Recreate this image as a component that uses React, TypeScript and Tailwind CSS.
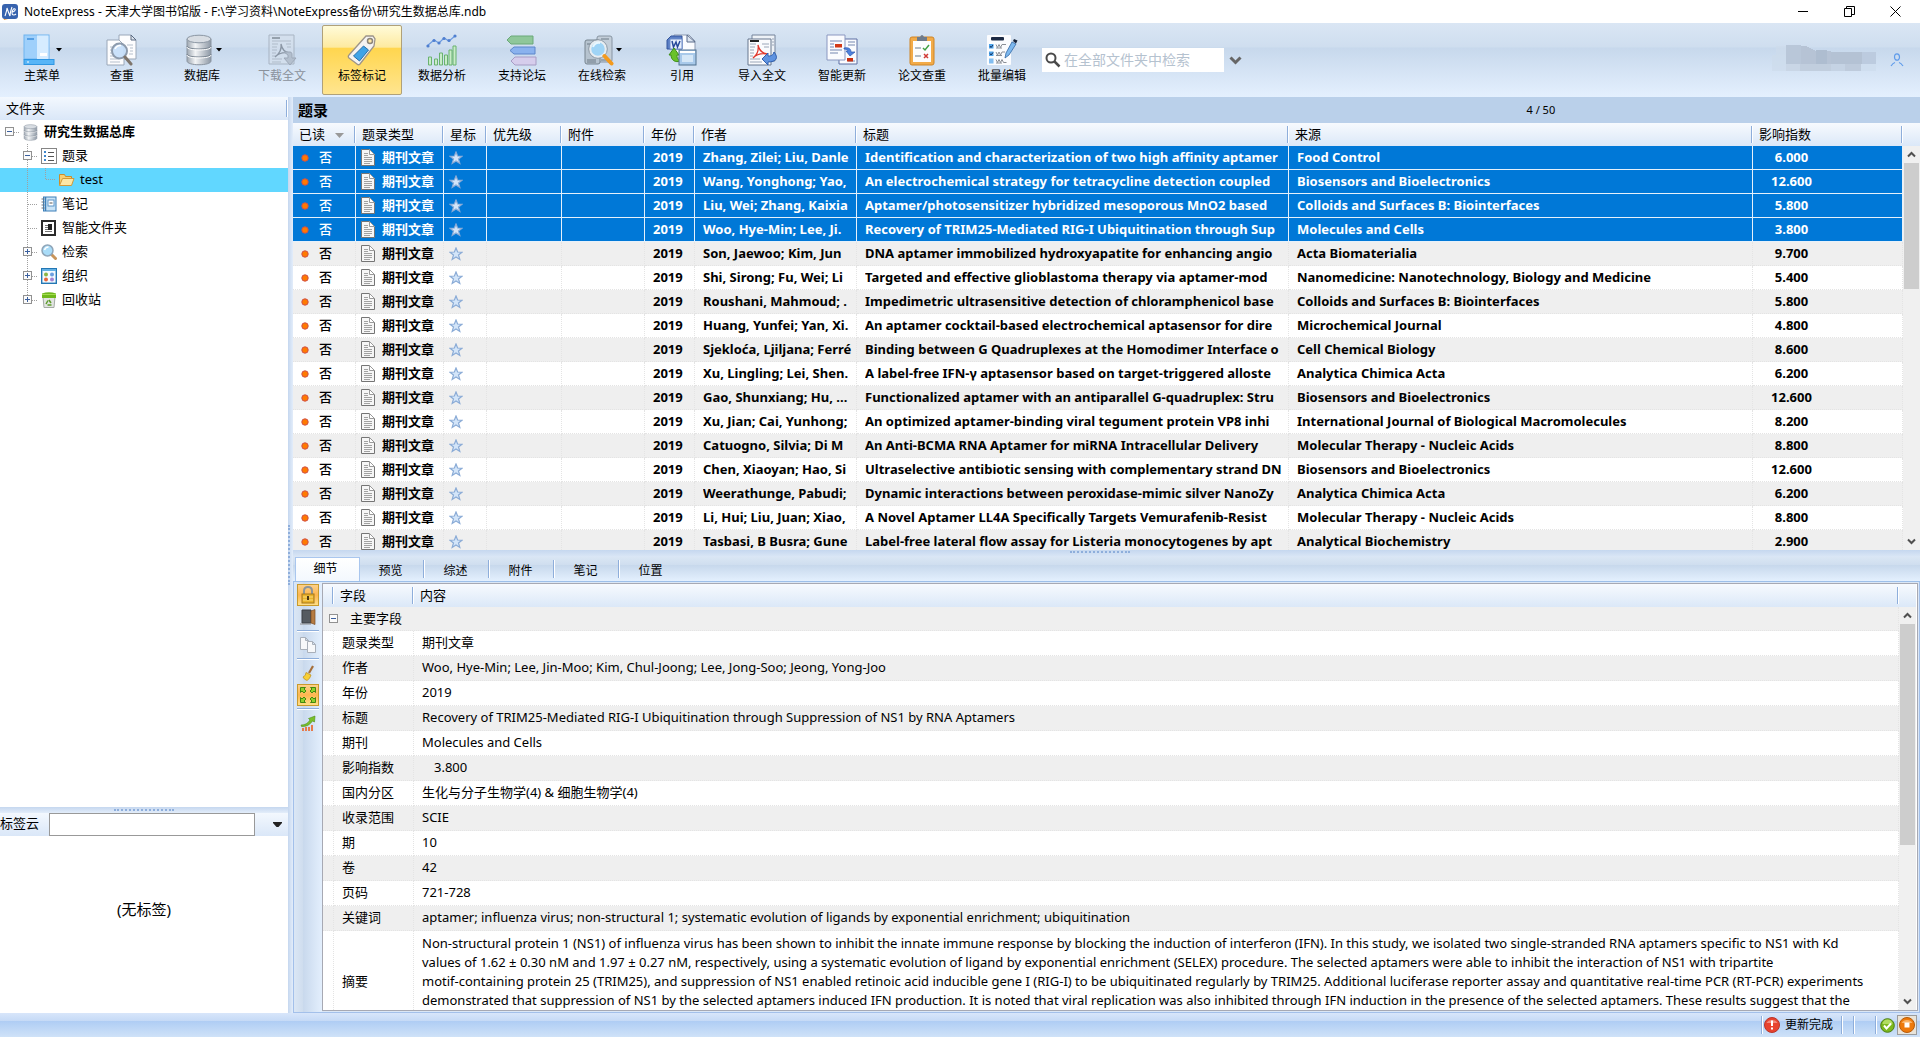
import { useState } from "react";
import type { ReactNode } from "react";

type Reference = {
  authors: string;
  title: string;
  source: string;
  impact: string;
};

type TreeNode = {
  label: string;
  icon: ReactNode;
  guides: GuideKind[];
  bold?: boolean;
  selected?: boolean;
};

type GuideKind = "root" | "minus" | "plus" | "plusLast" | "branch" | "line" | "elbow";

const REFERENCES: Reference[] = [
  { authors: "Zhang, Zilei; Liu, Danle", title: "Identification and characterization of two high affinity aptamer", source: "Food Control", impact: "6.000" },
  { authors: "Wang, Yonghong; Yao,", title: "An electrochemical strategy for tetracycline detection coupled", source: "Biosensors and Bioelectronics", impact: "12.600" },
  { authors: "Liu, Wei; Zhang, Kaixia", title: "Aptamer/photosensitizer hybridized mesoporous MnO2 based", source: "Colloids and Surfaces B: Biointerfaces", impact: "5.800" },
  { authors: "Woo, Hye-Min; Lee, Ji.", title: "Recovery of TRIM25-Mediated RIG-I Ubiquitination through Sup", source: "Molecules and Cells", impact: "3.800" },
  { authors: "Son, Jaewoo; Kim, Jun", title: "DNA aptamer immobilized hydroxyapatite for enhancing angio", source: "Acta Biomaterialia", impact: "9.700" },
  { authors: "Shi, Sirong; Fu, Wei; Li", title: "Targeted and effective glioblastoma therapy via aptamer-mod", source: "Nanomedicine: Nanotechnology, Biology and Medicine", impact: "5.400" },
  { authors: "Roushani, Mahmoud; .", title: "Impedimetric ultrasensitive detection of chloramphenicol base", source: "Colloids and Surfaces B: Biointerfaces", impact: "5.800" },
  { authors: "Huang, Yunfei; Yan, Xi.", title: "An aptamer cocktail-based electrochemical aptasensor for dire", source: "Microchemical Journal", impact: "4.800" },
  { authors: "Sjekloća, Ljiljana; Ferré", title: "Binding between G Quadruplexes at the Homodimer Interface o", source: "Cell Chemical Biology", impact: "8.600" },
  { authors: "Xu, Lingling; Lei, Shen.", title: "A label-free IFN-γ aptasensor based on target-triggered alloste", source: "Analytica Chimica Acta", impact: "6.200" },
  { authors: "Gao, Shunxiang; Hu, ...", title: "Functionalized aptamer with an antiparallel G-quadruplex: Stru", source: "Biosensors and Bioelectronics", impact: "12.600" },
  { authors: "Xu, Jian; Cai, Yunhong;", title: "An optimized aptamer-binding viral tegument protein VP8 inhi", source: "International Journal of Biological Macromolecules", impact: "8.200" },
  { authors: "Catuogno, Silvia; Di M", title: "An Anti-BCMA RNA Aptamer for miRNA Intracellular Delivery", source: "Molecular Therapy - Nucleic Acids", impact: "8.800" },
  { authors: "Chen, Xiaoyan; Hao, Si", title: "Ultraselective antibiotic sensing with complementary strand DN", source: "Biosensors and Bioelectronics", impact: "12.600" },
  { authors: "Weerathunge, Pabudi;", title: "Dynamic interactions between peroxidase-mimic silver NanoZy", source: "Analytica Chimica Acta", impact: "6.200" },
  { authors: "Li, Hui; Liu, Juan; Xiao,", title: "A Novel Aptamer LL4A Specifically Targets Vemurafenib-Resist", source: "Molecular Therapy - Nucleic Acids", impact: "8.800" },
  { authors: "Tasbasi, B Busra; Gune", title: "Label-free lateral flow assay for Listeria monocytogenes by apt", source: "Analytical Biochemistry", impact: "2.900" },
];

const DETAILS = [
  { field: "题录类型", value: "期刊文章" },
  { field: "作者", value: "Woo, Hye-Min; Lee, Jin-Moo; Kim, Chul-Joong; Lee, Jong-Soo; Jeong, Yong-Joo" },
  { field: "年份", value: "2019" },
  { field: "标题", value: "Recovery of TRIM25-Mediated RIG-I Ubiquitination through Suppression of NS1 by RNA Aptamers" },
  { field: "期刊", value: "Molecules and Cells" },
  { field: "影响指数", value: "3.800", indent: true },
  { field: "国内分区", value: "生化与分子生物学(4) & 细胞生物学(4)" },
  { field: "收录范围", value: "SCIE" },
  { field: "期", value: "10" },
  { field: "卷", value: "42" },
  { field: "页码", value: "721-728" },
  { field: "关键词", value: "aptamer; influenza virus; non-structural 1; systematic evolution of ligands by exponential enrichment; ubiquitination" },
];

const ABSTRACT = [
  "Non-structural protein 1 (NS1) of influenza virus has been shown to inhibit the innate immune response by blocking the induction of interferon (IFN). In this study, we isolated two single-stranded RNA aptamers specific to NS1 with Kd",
  "values of 1.62 ± 0.30 nM and 1.97 ± 0.27 nM, respectively, using a systematic evolution of ligand by exponential enrichment (SELEX) procedure. The selected aptamers were able to inhibit the interaction of NS1 with tripartite",
  "motif-containing protein 25 (TRIM25), and suppression of NS1 enabled retinoic acid inducible gene I (RIG-I) to be ubiquitinated regularly by TRIM25. Additional luciferase reporter assay and quantitative real-time PCR (RT-PCR) experiments",
  "demonstrated that suppression of NS1 by the selected aptamers induced IFN production. It is noted that viral replication was also inhibited through IFN induction in the presence of the selected aptamers. These results suggest that the",
];

const TABS = ["细节", "预览", "综述", "附件", "笔记", "位置"];

export default function App() {
  const [tab, setTab] = useState("细节");

  return (
    <div className="flex h-screen flex-col overflow-hidden bg-[#dbe7f6] font-['Noto_Sans','Noto_Sans_CJK_SC',sans-serif] text-[13px] text-black">
      <TitleBar />
      <Toolbar />
      <div className="flex min-h-0 flex-1">
        <aside className="flex w-[15%] shrink-0 flex-col bg-white">
          <FolderTree />
          <TagCloud />
        </aside>
        <div className="flex w-[5px] shrink-0 items-center bg-[linear-gradient(90deg,#c5d7ef,#e3edfa)]">
          <div className="h-[60px] w-[3px] border-l-2 border-dotted border-[#8eaedb]" />
        </div>
        <main className="flex min-w-0 flex-1 flex-col">
          <div className="flex h-[26px] shrink-0 items-center bg-[#bad0ea] pl-[5px]">
            <h1 className="w-3/4 text-[15px] font-bold">题录</h1>
            <span className="ml-3 text-[11px]">4 / 50</span>
          </div>
          <ReferenceList />
          <DetailPanel tab={tab} onTab={setTab} />
        </main>
      </div>
      <StatusBar />
    </div>
  );
}

function TitleBar() {
  return (
    <header className="flex h-[23px] shrink-0 items-center bg-white pl-[2px]">
      <svg width="16" height="18" viewBox="0 0 16 18">
        <path d="M1 12l1 5 4-1z" fill="#f29a2e" />
        <rect x="0" y="1" width="16" height="15" rx="3" fill="#3763ae" />
        <path d="M3 13c1-3 2-6 2-8 1 3 2 6 3 8 0-3 1-6 2-9M10 9c2 0 4-2 3-3s-3 1-3 4 3 2 4 1" fill="none" stroke="#fff" strokeWidth="1.1" />
      </svg>
      <span className="ml-[6px] flex-1 text-[12px]">NoteExpress - 天津大学图书馆版 - F:\学习资料\NoteExpress备份\研究生数据总库.ndb</span>
      <button aria-label="最小化" className="flex w-[46px] justify-center">
        <svg width="11" height="11"><path d="M0 5.5h10" stroke="#000" /></svg>
      </button>
      <button aria-label="还原" className="flex w-[46px] justify-center">
        <svg width="11" height="11" fill="none" stroke="#000"><path d="M.5 2.5h7v8h-7zM2.5 2.5v-2h8v8h-3" /></svg>
      </button>
      <button aria-label="关闭" className="mr-[2px] flex w-[46px] justify-center">
        <svg width="11" height="11" stroke="#000"><path d="M.5.5l10 10M10.5.5l-10 10" /></svg>
      </button>
    </header>
  );
}

function Toolbar() {
  return (
    <nav className="flex h-[74px] shrink-0 bg-[linear-gradient(#dae6f4_0%,#cfdeef_32%,#c7d8ec_34%,#e4f0fe_100%)] pl-[2px]">
      <ToolButton label="主菜单" icon={<MenuIcon />} menu />
      <ToolButton label="查重" icon={<DuplicateIcon />} />
      <ToolButton label="数据库" icon={<DatabaseIcon size={32} />} menu />
      <ToolButton label="下载全文" icon={<DownloadIcon />} disabled />
      <ToolButton label="标签标记" icon={<TagIcon />} active />
      <ToolButton label="数据分析" icon={<AnalysisIcon />} />
      <ToolButton label="支持论坛" icon={<ForumIcon />} />
      <ToolButton label="在线检索" icon={<OnlineSearchIcon />} menu />
      <ToolButton label="引用" icon={<CiteIcon />} />
      <ToolButton label="导入全文" icon={<ImportIcon />} />
      <ToolButton label="智能更新" icon={<UpdateIcon />} />
      <ToolButton label="论文查重" icon={<ClipboardIcon />} />
      <ToolButton label="批量编辑" icon={<BatchIcon />} />
      <label className="mt-[25px] flex h-[24px] w-[182px] items-center bg-white">
        <svg className="ml-[3px] shrink-0" width="16" height="16" fill="none" stroke="#4a4a4a">
          <circle cx="6" cy="6" r="4.5" strokeWidth="2" />
          <path d="M9.500 9.500l5 5" strokeWidth="2.500" />
        </svg>
        <input className="ml-[3px] h-[22px] min-w-0 flex-1 pb-[2px] text-[14px] outline-none placeholder:text-[#b5c2cf]" placeholder="在全部文件夹中检索" />
      </label>
      <button aria-label="检索选项" className="mt-[25px] flex h-[24px] w-[22px] items-center justify-center">
        <svg width="13" height="9" fill="none" stroke="#666" strokeWidth="3"><path d="M1.500 1.500l5 5 5-5" /></svg>
      </button>
      <div className="flex-1" />
      <svg className="mt-[20px]" width="110" height="28" shapeRendering="crispEdges">
        <path fill="#cddbeb" d="M4 3h10v30H0V12h4z" opacity=".7" />
        <path fill="#b9c7d9" d="M14 2h15v19H14z" />
        <path fill="#b6c3d5" d="M29 3h5l10 5h15v13H29z" />
        <path fill="#aebdd0" d="M44 7h11v14H44z" />
        <path fill="#b4c2d4" d="M59 9h31v12H59z" />
        <path fill="#bccbdf" d="M90 9h14v12H90z" />
        <path fill="#c9d6e6" d="M14 21h14v7H14z" />
        <path fill="#c1cede" d="M28 21h31v12H28z" />
        <path fill="#c5d3e4" d="M59 21h14v12H59z" />
        <path fill="#becbdc" d="M73 21h16v12H73z" />
        <path fill="#cfdeef" d="M89 21h15v12H89z" />
      </svg>
      <button aria-label="用户" className="mr-[16px] ml-[8px] h-[74px] w-[14px]">
        <svg width="14" height="14" fill="none" stroke="#5f9bea" strokeWidth="1.200">
          <ellipse cx="7" cy="4" rx="2.500" ry="3.200" />
          <path d="M1 13q2-3 4-3.500M13 13q-2-3-4-3.500" />
        </svg>
      </button>
    </nav>
  );
}

function ToolButton({ label, icon, menu, active, disabled }: { label: string; icon: ReactNode; menu?: boolean; active?: boolean; disabled?: boolean }) {
  return (
    <button
      disabled={disabled}
      className={`mt-[2px] flex h-[70px] w-[80px] shrink-0 flex-col items-center rounded-[2px] border pt-[8px] ${active ? "border-[#b0a179] bg-[linear-gradient(#fffbd9_0%,#fdeaa0_31%,#ffd64f_33%,#ffe58f_100%)]" : "border-transparent"} ${disabled ? "text-[#8a919b]" : ""}`}
    >
      <span className="flex h-[32px] items-center">
        {icon}
        {menu ? <svg className="ml-[1px]" width="6" height="4"><path d="M0 0h6L3 3.500z" /></svg> : null}
      </span>
      <span className="text-[12px] leading-[20px]">{label}</span>
    </button>
  );
}

function FolderTree() {
  const nodes: TreeNode[] = [
    { label: "研究生数据总库", icon: <DatabaseIcon size={17} />, guides: ["root"], bold: true },
    { label: "题录", icon: <ListIcon />, guides: ["minus"] },
    { label: "test", icon: <FolderIcon />, guides: ["line", "elbow"], selected: true },
    { label: "笔记", icon: <NotebookIcon />, guides: ["branch"] },
    { label: "智能文件夹", icon: <SmartFolderIcon />, guides: ["branch"] },
    { label: "检索", icon: <MagnifierIcon />, guides: ["plus"] },
    { label: "组织", icon: <OrganizeIcon />, guides: ["plus"] },
    { label: "回收站", icon: <RecycleIcon />, guides: ["plusLast"] },
  ];

  return (
    <>
      <div className="flex h-[23px] shrink-0 items-center bg-[linear-gradient(#f3f8fe,#dae7f8)] pl-[6px]">
        <span className="flex-1">文件夹</span>
        <span className="h-[17px] w-[2px] border-r border-white bg-[#8eaedb]" />
      </div>
      <ul className="min-h-0 flex-[687]">
        {nodes.map((node) => (
          <li
            key={node.label}
            className={`flex h-[24px] items-center ${node.guides[0] === "root" ? "pl-[4px]" : "pl-[22px]"} ${node.selected ? "bg-[#61d7ff]" : ""}`}
          >
            {node.guides.map((kind) => <Guide key={kind} kind={kind} />)}
            <span className="flex w-[17px] shrink-0 justify-center">{node.icon}</span>
            <span className={`ml-[5px] ${node.bold ? "font-bold" : ""}`}>{node.label}</span>
          </li>
        ))}
      </ul>
    </>
  );
}

function Guide({ kind }: { kind: GuideKind }) {
  const boxed = kind === "root" || kind === "minus" || kind === "plus" || kind === "plusLast";
  const lines: Record<GuideKind, string> = {
    root: "M5.500 12.500h9",
    minus: "M5.500 0v24M5.500 12.500h9",
    plus: "M5.500 0v24M5.500 12.500h9",
    plusLast: "M5.500 0v12M5.500 12.500h9",
    branch: "M5.500 0v24M5.500 12.500h9",
    line: "M5.500 0v24",
    elbow: "M5.500 0v12M5.500 11.500h9",
  };
  return (
    <svg className="shrink-0" width="18" height="24" fill="none" shapeRendering="crispEdges">
      <path d={lines[kind]} stroke="#a0a0a0" strokeDasharray="1 1" />
      {boxed ? <ExpandBox plus={kind === "plus" || kind === "plusLast"} y={7} /> : null}
    </svg>
  );
}

function ExpandBox({ plus, y }: { plus?: boolean; y: number }) {
  return (
    <g transform={`translate(1 ${y})`}>
      <rect x=".5" y=".5" width="8" height="8" fill="#fbfbfb" stroke="#919191" />
      <path d={plus ? "M2 4.500h5M4.500 2v5" : "M2 4.500h5"} stroke="#3a5f9e" />
    </g>
  );
}

function TagCloud() {
  return (
    <>
      <div className="flex h-[6px] shrink-0 items-center justify-center bg-[linear-gradient(#c5d7ef,#e3edfa)]">
        <div className="w-[60px] border-t-2 border-dotted border-[#8eaedb]" />
      </div>
      <div className="flex h-[23px] shrink-0 items-center bg-[linear-gradient(#f3f8fe,#dae7f8)]">
        <label htmlFor="tag-filter" className="w-[49px] pb-[2px] whitespace-nowrap">标签云</label>
        <input id="tag-filter" className="h-[23px] min-w-0 flex-1 border border-[#999] bg-white px-1 outline-none" />
        <button aria-label="标签选项" className="flex w-[33px] justify-center pl-[11px]">
          <svg width="9" height="5"><path d="M0 0h9v1L5.500 5h-2L0 1z" fill="#222" /></svg>
        </button>
      </div>
      <div className="flex min-h-0 flex-[177] items-center justify-center text-[15px]">
        <span className="mb-[30px]">(无标签)</span>
      </div>
    </>
  );
}

function HeadCell({ label, className, sorted }: { label: string; className?: string; sorted?: boolean }) {
  return (
    <th className={`h-[23px] p-0 text-left font-normal ${className ?? ""}`}>
      <div className="flex items-center pl-[6px]">
        <span className="flex-1 whitespace-nowrap">
          {label}
          {sorted ? <svg className="ml-[10px] inline-block" width="9" height="5"><path d="M0 0h9L4.500 5z" fill="#999" /></svg> : null}
        </span>
        <span className="h-[17px] w-[2px] border-r border-white bg-[#8eaedb]" />
      </div>
    </th>
  );
}

function ReferenceList() {
  return (
    <section className="flex min-h-0 flex-[427] overflow-hidden bg-white">
      <div className="min-w-0 flex-1">
        <table className="w-full table-fixed border-separate border-spacing-0">
          <thead className="bg-[linear-gradient(#f7fafe,#dbe8f8)]">
            <tr>
              <HeadCell label="已读" sorted className="w-[63px]" />
              <HeadCell label="题录类型" className="w-[88px]" />
              <HeadCell label="星标" className="w-[43px]" />
              <HeadCell label="优先级" className="w-[75px]" />
              <HeadCell label="附件" className="w-[83px]" />
              <HeadCell label="年份" className="w-[50px]" />
              <HeadCell label="作者" className="w-[162px]" />
              <HeadCell label="标题" className="w-[432px]" />
              <HeadCell label="来源" />
              <HeadCell label="影响指数" className="w-[150px]" />
            </tr>
          </thead>
          <tbody className="font-bold">
            {REFERENCES.map((ref, i) => (
              <ReferenceRow key={i} item={ref} selected={i < 4} striped={i % 2 === 0} />
            ))}
          </tbody>
        </table>
      </div>
      <div className="flex w-[17px] shrink-0 flex-col">
        <div className="h-[23px] bg-[linear-gradient(#f7fafe,#dbe8f8)]" />
        <ScrollBar thumb="h-[34%]" />
      </div>
    </section>
  );
}

function ReferenceRow({ item, selected, striped }: { item: Reference; selected: boolean; striped: boolean }) {
  const line = selected ? "border-r border-b border-[#e6f1fb]" : "border-r border-b border-dotted border-[#e4e4e4]";
  const tone = selected ? "bg-[#0078d7] text-white" : striped ? "bg-[#efefef]" : "bg-white";
  const text = `h-[24px] overflow-hidden p-0 pr-[4px] pl-[8px] whitespace-nowrap ${line}`;
  return (
    <tr className={tone}>
      <td className={`h-[24px] p-0 ${line}`}>
        <span className="flex items-center pl-[8px]">
          <svg width="8" height="8"><circle cx="4" cy="4" r="3.200" fill="#ff7a00" stroke="#d0524a" /></svg>
          <span className="ml-[10px] font-medium">否</span>
        </span>
      </td>
      <td className={`h-[24px] p-0 ${line}`}>
        <span className="flex items-center pl-[5px] whitespace-nowrap">
          <PageIcon />
          <span className="ml-[7px]">期刊文章</span>
        </span>
      </td>
      <td className={`h-[24px] p-0 pl-[5px] ${line}`}><StarIcon /></td>
      <td className={`h-[24px] p-0 ${line}`} />
      <td className={`h-[24px] p-0 ${line}`} />
      <td className={text}>2019</td>
      <td className={text}><div className="overflow-hidden">{item.authors}</div></td>
      <td className={text}><div className="overflow-hidden">{item.title}</div></td>
      <td className={text}>{item.source}</td>
      <td className={`h-[24px] p-0 pr-[72px] text-center ${line}`}>{item.impact}</td>
    </tr>
  );
}

function ScrollBar({ thumb }: { thumb: string }) {
  return (
    <div className="flex min-h-0 flex-1 flex-col items-center bg-[#f0f0f0]">
      <button aria-label="向上滚动" className="flex h-[17px] items-center">
        <svg width="9" height="7" fill="none" stroke="#505050" strokeWidth="2"><path d="M1 5.500L4.500 2 8 5.500" /></svg>
      </button>
      <div className="flex min-h-0 w-full flex-1 justify-center">
        <div className={`w-[15px] bg-[#cdcdcd] ${thumb}`} />
      </div>
      <button aria-label="向下滚动" className="flex h-[17px] items-center">
        <svg width="9" height="7" fill="none" stroke="#505050" strokeWidth="2"><path d="M1 1.500L4.500 5 8 1.500" /></svg>
      </button>
    </div>
  );
}

function DetailPanel({ tab, onTab }: { tab: string; onTab: (t: string) => void }) {
  return (
    <section className="flex min-h-0 flex-[463] flex-col">
      <div className="flex h-[7px] shrink-0 justify-center bg-[linear-gradient(#c5d7ef,#dbe7f6)] pt-[1px]">
        <div className="mr-[14px] h-[2px] w-[60px] border-t-2 border-dotted border-[#8eaedb]" />
      </div>
      <div className="flex h-[25px] shrink-0 items-end border-b border-[#9dbfe9] bg-[linear-gradient(#dae6f4_0%,#cfdeef_32%,#c7d8ec_34%,#e4f0fe_100%)] pl-[2px]">
        {TABS.map((t) => (
          <button
            key={t}
            onClick={() => onTab(t)}
            className={`relative flex h-[24px] w-[65px] justify-center pr-[4px] text-[12px] ${t === tab ? "border border-b-0 border-[#a9c6ee] bg-[linear-gradient(#ffffff,#f3f8fe)] leading-[22px]" : "leading-[28px]"}`}
          >
            {t}
            {t !== tab && t !== "位置" ? <span className="absolute top-[3px] right-0 h-[18px] w-[2px] border-r border-white bg-[#8eaedb]" /> : null}
          </button>
        ))}
      </div>
      <div className="flex min-h-0 flex-1 border border-t-0 border-[#a3c0ea]">
        <SideTools />
        <div className="my-px mr-px flex min-w-0 flex-1 overflow-hidden border border-[#a7a9b3] bg-white pr-px">
          <div className="min-w-0 flex-1 overflow-hidden">
            <DetailTable />
          </div>
          <div className="flex w-[17px] shrink-0 flex-col">
            <div className="h-[23px] bg-[linear-gradient(#f7fafe,#dbe8f8)]" />
            <ScrollBar thumb="h-[60%]" />
          </div>
        </div>
      </div>
    </section>
  );
}

function DetailTable() {
  const line = "border-r border-b border-dotted border-[#e4e4e4]";
  return (
    <table className="w-full table-fixed border-separate border-spacing-0">
      <thead className="bg-[linear-gradient(#f7fafe,#dbe8f8)]">
        <tr>
          <HeadCell label="" className="w-[11px]" />
          <HeadCell label="字段" className="w-[80px]" />
          <HeadCell label="内容" />
        </tr>
      </thead>
      <tbody>
        <tr className="bg-[#efefef]">
          <td colSpan={3} className={`h-[24px] p-0 ${line}`}>
            <span className="flex items-center pl-[5px]">
              <svg width="11" height="11" shapeRendering="crispEdges"><ExpandBox y={1} /></svg>
              <span className="ml-[11px]">主要字段</span>
            </span>
          </td>
        </tr>
        {DETAILS.map((d, i) => (
          <tr key={d.field} className={i % 2 === 1 ? "bg-[#efefef]" : ""}>
            <td className={`h-[25px] p-0 ${line}`} />
            <td className={`h-[25px] p-0 pl-[8px] ${line}`}>{d.field}</td>
            <td className={`h-[25px] p-0 whitespace-nowrap ${d.indent ? "pl-[20px]" : "pl-[8px]"} ${line}`}>{d.value}</td>
          </tr>
        ))}
        <tr>
          <td className={`h-[103px] p-0 ${line}`} />
          <td className={`h-[103px] p-0 pl-[8px] ${line}`}>摘要</td>
          <td className={`h-[103px] p-0 pt-[3px] pl-[8px] align-top leading-[19px] whitespace-nowrap ${line}`}>
            {ABSTRACT.map((text) => <p key={text}>{text}</p>)}
          </td>
        </tr>
      </tbody>
    </table>
  );
}

function SideTools() {
  const base = "flex h-[22px] w-[22px] shrink-0 items-center justify-center border";
  const on = "border-[#c99a2c] bg-[linear-gradient(#fcd08a,#fdb64f_50%,#ffdf86)]";
  return (
    <div className="flex w-[28px] shrink-0 flex-col items-center bg-[linear-gradient(90deg,#dbe7f5_0%,#cfddee_32%,#c9d9ed_34%,#e3effd_100%)] pt-[2px]">
      <button aria-label="锁定" className={`${base} ${on}`}><LockIcon /></button>
      <button aria-label="关闭面板" className={`${base} border-transparent`}><DoorIcon /></button>
      <Divider />
      <button aria-label="复制" className={`${base} border-transparent`}><CopyIcon /></button>
      <Divider />
      <button aria-label="清理" className={`${base} border-transparent`}><BroomIcon /></button>
      <button aria-label="展开" className={`${base} ${on}`}><ExpandIcon /></button>
      <Divider />
      <button aria-label="统计" className={`${base} border-transparent`}><TrendIcon /></button>
    </div>
  );
}

function Divider() {
  return <span className="my-[2px] h-[2px] w-[22px] shrink-0 border-b border-white bg-[#8eaedb]" />;
}

function StatusBar() {
  const sep = "h-[18px] w-[2px] border-r border-white bg-[#8eaedb]";
  return (
    <footer className="flex h-[24px] shrink-0 items-center justify-end bg-[linear-gradient(#d8e6fa_0%,#c6daf6_32%,#afcdf4_34%,#cfe2f8_100%)] pr-[3px] text-[12px]">
      <span className={sep} />
      <svg className="ml-px" width="16" height="16" viewBox="0 0 16 16">
        <circle cx="8" cy="8" r="7.500" fill="#e8432f" stroke="#b9362a" />
        <path d="M2.500 6a6 5 0 0111 0z" fill="#f28b7c" />
        <path d="M8 3.500v5.500M8 10.500v2" stroke="#fff" strokeWidth="2" />
      </svg>
      <span className="mr-[8px] ml-[5px]">更新完成</span>
      <span className={sep} />
      <span className={`ml-[10px] ${sep}`} />
      <span className={`mr-[3px] ml-[20px] ${sep}`} />
      <svg width="15" height="15" viewBox="0 0 15 15">
        <circle cx="7.500" cy="7.500" r="6.800" fill="#7cb81f" stroke="#4b7d12" />
        <path d="M2.500 6a5 4.500 0 0110 0z" fill="#b2dc62" />
        <path d="M4 7.500l2.500 3L11 5.500" fill="none" stroke="#fff" strokeWidth="2" />
      </svg>
      <button aria-label="停止" className="ml-[2px] flex h-[20px] w-[20px] items-center justify-center border border-[#9c9c9c] bg-[#e9e4da]">
        <svg width="16" height="16" viewBox="0 0 16 16">
          <circle cx="8" cy="8" r="7.500" fill="#ee7a0c" stroke="#b75b0a" />
          <path d="M2.500 6a6 5 0 0111 0z" fill="#f8b368" />
          <rect x="5.500" y="5.500" width="5" height="5" fill="#fff" />
        </svg>
      </button>
    </footer>
  );
}

/* toolbar icons */

function MenuIcon() {
  return (
    <svg width="32" height="32" viewBox="0 0 32 32">
      <rect x="1" y="1" width="25" height="24" fill="#9fd0fb" stroke="#6fb4f0" />
      <rect x="14" y="1.500" width="11.500" height="23.500" fill="#d6ecff" />
      <path d="M4 5h7" stroke="#3c8fdc" strokeWidth="1.500" />
      <rect x="17" y="19" width="7" height="3" fill="#fff" />
      <rect x="1" y="25.500" width="30" height="5" fill="#57b5f7" stroke="#2f96e2" />
      <path d="M4 28h2" stroke="#fff" />
    </svg>
  );
}

function DuplicateIcon() {
  return (
    <svg width="32" height="32" viewBox="0 0 32 32">
      <path d="M13 1h12l5 5v19H13z" fill="#fdfdfe" stroke="#9aa7b8" />
      <path d="M25 1v5h5z" fill="#dfe6ef" stroke="#5a6b82" />
      <path d="M1 6h12l5 5v20H1z" fill="#fdfdfe" stroke="#9aa7b8" />
      <path d="M4 13h4M4 16h3M4 19h3M4 22h4M4 25h9M4 28h10M21 11h6M24 14h3M24 17h3M23 20h4" stroke="#b5bfcc" />
      <circle cx="13.500" cy="17" r="7.500" fill="#c4defa" fillOpacity=".9" stroke="#8d9bad" strokeWidth="2" />
      <path d="M9 15q2-4 6-3.500" fill="none" stroke="#fff" strokeWidth="1.500" />
      <path d="M19 23l6 7" stroke="#7e756c" strokeWidth="3" strokeLinecap="round" />
    </svg>
  );
}

function DatabaseIcon({ size }: { size: number }) {
  return (
    <svg width={size} height={size} viewBox="0 0 32 32">
      <defs>
        <linearGradient id="db">
          <stop offset="0" stopColor="#9ea7b1" />
          <stop offset=".35" stopColor="#f2f4f6" />
          <stop offset="1" stopColor="#8d98a5" />
        </linearGradient>
      </defs>
      <path d="M4 5v22c0 5 24 5 24 0V5z" fill="url(#db)" stroke="#8b95a1" />
      <path d="M4 12c0 4 24 4 24 0M4 20c0 4 24 4 24 0" fill="none" stroke="#7d8894" strokeWidth="1.200" />
      <path d="M4 13c0 4 24 4 24 0M4 21c0 4 24 4 24 0" fill="none" stroke="#fff" />
      <ellipse cx="16" cy="5" rx="12" ry="3.800" fill="#d8dde3" stroke="#8b96a3" />
    </svg>
  );
}

function DownloadIcon() {
  return (
    <svg width="32" height="32" viewBox="0 0 32 32" opacity=".7">
      <path d="M3 1h25v29H3z" fill="#d4dfec" stroke="#98a3b1" />
      <path d="M6 4h8" stroke="#5f6873" strokeWidth="1.500" />
      <path d="M6 7h19M6 10h6M6 13h5M6 16h5M6 19h4M6 22h4M6 25h10M6 28h9M20 10h5M21 13h4" stroke="#a3adba" />
      <path d="M9 23c4-3 7-7 6-13 1 5 3 8 8 9-5-1-10 0-14 4z" fill="none" stroke="#707a87" strokeWidth="1.300" />
      <path d="M18 18h6c2 0 2 2 2 3v3h4l-6 7-6-7h4v-3z" fill="#a9b3c0" stroke="#8892a0" />
    </svg>
  );
}

function TagIcon() {
  return (
    <svg width="32" height="32" viewBox="0 0 32 32">
      <path d="M20 2l7 0 2 3-1 7-14 18c-1 1-2 1-3 0l-8-6c-1-1-1-2 0-3z" fill="#f5f3f1" stroke="#9c9489" strokeWidth="1.300" />
      <path d="M17.500 12l5 4-9 11-6-5z" fill="#3fa3e6" stroke="#2a6fa8" />
      <circle cx="24" cy="7" r="2.500" fill="#ffe9a6" stroke="#8d8579" strokeWidth="1.500" />
    </svg>
  );
}

function AnalysisIcon() {
  return (
    <svg width="32" height="32" viewBox="0 0 32 32">
      <path d="M1 12l7-6 5 3 5-5 5 3 6-5" fill="none" stroke="#6d9be0" strokeWidth="1.200" />
      <g fill="#4f7fd0"><circle cx="2" cy="12" r="1.600" /><circle cx="8" cy="6.500" r="1.600" /><circle cx="13" cy="9" r="1.600" /><circle cx="18" cy="4.500" r="1.600" /><circle cx="23" cy="6.500" r="1.600" /><circle cx="29" cy="2" r="1.600" /></g>
      <path d="M2.500 23h3v8h-3zM8.500 25h3v6h-3zM13.500 19h3v12h-3zM18.500 21h3v10h-3zM23 16h3v15h-3zM27 12h3v19h-3z" fill="#c9ecc9" stroke="#69b26f" />
    </svg>
  );
}

function ForumIcon() {
  return (
    <svg width="32" height="32" viewBox="0 0 32 32">
      <path d="M5 2h22v8H5L1 6z" fill="#8fc79a" stroke="#6aa978" />
      <path d="M8 13h21v7H8l-4-3.500z" fill="#8ab2ee" stroke="#5c86ca" />
      <path d="M9 23h21v8H9l-4-4z" fill="#d6cdec" stroke="#a79cc4" />
    </svg>
  );
}

function OnlineSearchIcon() {
  return (
    <svg width="32" height="32" viewBox="0 0 32 32">
      <rect x="14" y="2" width="15" height="26" rx="2" fill="#c3ced9" stroke="#8794a2" />
      <rect x="2" y="6" width="15" height="24" rx="2" fill="#b6c3cf" stroke="#76848f" />
      <path d="M4 10h6M4 26h9M4 28h9M18 5h8M18 26h7" stroke="#6c7a86" />
      <circle cx="15" cy="15" r="8" fill="#9fd4f6" stroke="#e7edf2" strokeWidth="2.500" />
      <circle cx="15" cy="15" r="9.300" fill="none" stroke="#7f8c98" strokeWidth=".8" />
      <path d="M10 13q2-5 7-4" fill="none" stroke="#e9f7ff" strokeWidth="2" />
      <path d="M21.500 22l7 7.500" stroke="#f39a1d" strokeWidth="4" strokeLinecap="round" />
    </svg>
  );
}

function CiteIcon() {
  return (
    <svg width="32" height="32" viewBox="0 0 32 32">
      <path d="M8 1h15l6 6v17H8z" fill="#fafcff" stroke="#8b99b0" />
      <path d="M21 1v7h8z" fill="#dce5f1" stroke="#5b6d8c" />
      <path d="M5 2h11v13H1V6z" fill="#5b7fc4" stroke="#33559d" />
      <rect x="4" y="5" width="12" height="10" fill="#e7effc" stroke="#6e8ecb" />
      <path d="M6 7l1.500 6L10 8l1.500 5L14 7" fill="none" stroke="#27499a" strokeWidth="1.500" />
      <path d="M8 14l5 7h-2c0 4 1 5 4 6-6 2-10-1-10-6H3z" fill="#6ac22c" stroke="#3f8f16" />
      <rect x="13" y="16" width="17" height="15" fill="#a8c9ea" stroke="#51708f" />
      <path d="M14 18h15" stroke="#fff" strokeWidth="2" />
      <path d="M16 28v-7h11v7z" fill="#d5e7f7" />
    </svg>
  );
}

function ImportIcon() {
  return (
    <svg width="32" height="32" viewBox="0 0 32 32">
      <path d="M6 1h23v26H6z" fill="#eef2f7" stroke="#74839a" />
      <path d="M2 5h23v26H2z" fill="#fafbfd" stroke="#66768e" />
      <path d="M4 7h9" stroke="#222" strokeWidth="2" />
      <path d="M4 10h6M4 13h5M4 16h4M4 19h4M4 22h3M4 25h10M4 28h12M16 10h7M18 13h5M26 5h2M26 8h2M26 11h2" stroke="#9aa6b8" />
      <path d="M7 24c4-3 6-7 5-13 1 5 4 8 9 9-5-1-10 0-14 4z" fill="none" stroke="#e0372c" strokeWidth="1.300" />
      <path d="M16 25l6-6v3c4 0 5-1 6-4 5 6 2 10-6 10v3z" fill="#5f93e0" stroke="#2f5fae" />
    </svg>
  );
}

function UpdateIcon() {
  return (
    <svg width="32" height="32" viewBox="0 0 32 32">
      <path d="M13 5h18v25H13z" fill="#fafbfe" stroke="#5d6fa3" />
      <path d="M1 1h18v25H1z" fill="#fafbfe" stroke="#8a97c0" />
      <path d="M4 7h12M4 13h4M4 10h4M4 16h12M4 19h8M22 8h7M22 11h7M22 27h7" stroke="#7487b0" />
      <rect x="9" y="10" width="7" height="3.500" fill="#d33a16" />
      <rect x="21" y="24" width="6" height="3.500" fill="#c92f10" />
      <path d="M18 14c5-1 7 1 7 4h4l-5 4-4-5h2c0-1-2-2-4-2z" fill="#4f82dd" stroke="#2d59b0" strokeWidth=".7" />
    </svg>
  );
}

function ClipboardIcon() {
  return (
    <svg width="32" height="32" viewBox="0 0 32 32">
      <rect x="4" y="3" width="24" height="28" rx="2" fill="#f2ab49" stroke="#cf8527" />
      <rect x="7" y="7" width="18" height="21" fill="#fdfdfd" />
      <path d="M11 7V3h3q2-4 4 0h3v4z" fill="#6e7b8b" />
      <path d="M9 14h6M9 22h6" stroke="#9ba6b3" strokeWidth="1.300" />
      <path d="M17 14l2 2 4-5" fill="none" stroke="#3fa142" strokeWidth="1.500" />
      <path d="M18 20l4 4M22 20l-4 4" stroke="#d13a34" strokeWidth="1.500" />
    </svg>
  );
}

function BatchIcon() {
  return (
    <svg width="32" height="32" viewBox="0 0 32 32">
      <rect x="1" y="1" width="24" height="30" rx="1" fill="#fbfcfe" />
      <rect x="5" y="3" width="13" height="3.500" rx="1" fill="#1c2a44" />
      <g fill="#4ea3ea"><rect x="3" y="10" width="4.500" height="4.500" /><rect x="3" y="17.500" width="4.500" height="4.500" /><rect x="3" y="24.500" width="4.500" height="5" opacity=".7" /></g>
      <path d="M4 12l1 1.500L7 11M4 19.500l1 1.500L7 18.500" fill="none" stroke="#16305a" />
      <path d="M10 10.500l1.500 3 1.500-3 1.500 3 1.500-3h4M10 14h6M10 18l1.500 3 1.500-3 1.500 3 1.500-3h3M10 21.500h6M10 25.500l1.500 3 1.500-3 1.500 3 1.500-3 1.500 3h3M10 29h6" fill="none" stroke="#8b8f96" />
      <path d="M26 8l4 2L23 21l-4 3 1-5z" fill="#7db8ee" stroke="#3468a5" strokeWidth=".8" />
      <path d="M27 7l1-2 3.500 1.500-1.500 3z" fill="#18243a" />
    </svg>
  );
}

/* tree icons */

function ListIcon() {
  return (
    <svg width="16" height="16" shapeRendering="crispEdges">
      <rect x=".5" y=".5" width="15" height="15" fill="#fff" stroke="#858585" />
      <path d="M3 4h2M3 8h2M3 12h2" stroke="#3f87cc" strokeWidth="2" />
      <path d="M7 4.500h6M7 8.500h6M7 12.500h6" stroke="#555" />
    </svg>
  );
}

function FolderIcon() {
  return (
    <svg width="17" height="16">
      <path d="M1.500 13.500v-11h5l1 2h6v3" fill="#f7cf72" stroke="#c98e2c" />
      <path d="M1.500 13.500l3-7h11.500l-2.500 7z" fill="#fde7a6" stroke="#d09a3a" />
    </svg>
  );
}

function NotebookIcon() {
  return (
    <svg width="16" height="16">
      <rect x="2.500" y="1" width="12.500" height="14" fill="#c8e3f7" stroke="#3c7fb8" />
      <path d="M4.500 1v14" stroke="#3c7fb8" strokeWidth="1.500" />
      <path d="M.500 3h3M.500 6h3M.500 9h3M.500 12h3" stroke="#6c7680" />
      <rect x="7" y="4" width="6" height="6" fill="#fff" stroke="#5c96c8" />
      <path d="M8.500 7h3" stroke="#555" />
    </svg>
  );
}

function SmartFolderIcon() {
  return (
    <svg width="15" height="16" shapeRendering="crispEdges">
      <rect x="1" y="1" width="13" height="14" fill="#fff" stroke="#2b2b2b" strokeWidth="2" />
      <path d="M4 5.500h3M4 7.500h3M4 9.500h3M4 11.500h7" stroke="#777" />
      <rect x="7" y="4" width="4" height="6" fill="#222" />
    </svg>
  );
}

function MagnifierIcon() {
  return (
    <svg width="16" height="16">
      <path d="M10.500 10.500l4 4" stroke="#c9955a" strokeWidth="3" strokeLinecap="round" />
      <circle cx="6.500" cy="6.500" r="5.500" fill="#a9dcf8" stroke="#8fa5b8" strokeWidth="1.500" />
      <path d="M3.500 6q1-3 4-3" fill="none" stroke="#fff" strokeWidth="1.500" />
    </svg>
  );
}

function OrganizeIcon() {
  return (
    <svg width="16" height="16">
      <rect x=".7" y=".7" width="14.600" height="14.600" fill="#f4fafe" stroke="#2377b4" strokeWidth="1.400" />
      <path d="M1 2h14" stroke="#62b0e4" strokeWidth="2" />
      <circle cx="5" cy="6.500" r="2" fill="#8cb544" /><circle cx="11" cy="6.500" r="2" fill="#6c9fe0" />
      <circle cx="5" cy="11.500" r="2" fill="#e8663a" /><circle cx="11" cy="11.500" r="2" fill="#a583d3" />
    </svg>
  );
}

function RecycleIcon() {
  return (
    <svg width="16" height="16">
      <path d="M2 5h12l-1 10.500H3z" fill="#e2e5e2" stroke="#a5aaa5" />
      <path d="M1 1.500q7-2.500 14 0V6H1z" fill="#6fb81c" />
      <path d="M1 2.500h14" stroke="#a3dc4e" />
      <path d="M8 8l2 3M10.500 13h-4M5 12l2-3.500" stroke="#5d9c2a" strokeWidth="1.500" />
    </svg>
  );
}

/* list icons */

function PageIcon() {
  return (
    <svg className="shrink-0" width="14" height="17">
      <path d="M.5.5h8l5 5v11H.5z" fill="#f6f6f6" stroke="#757575" />
      <path d="M8.500.5v5h5z" fill="#fff" stroke="#9a9a9a" />
      <path d="M3 4.500h4M3 6.500h4M3 8.500h8M3 10.500h8M3 12.500h8M3 14.500h6" stroke="#a2a2a2" />
    </svg>
  );
}

function StarIcon() {
  return (
    <svg width="14" height="14" viewBox="0 0 14 14">
      <path d="M7 1l1.600 4 4.400.2-3.500 2.700 1.300 4.500L7 9.900l-3.800 2.500 1.300-4.500L1 5.200 5.400 5z" fill="#d3e5f9" stroke="#8aabd6" strokeWidth="1.200" />
    </svg>
  );
}

/* side tool icons */

function LockIcon() {
  return (
    <svg width="16" height="18">
      <path d="M4 8V5q0-4 4-4t4 4v3" fill="none" stroke="#8d9499" strokeWidth="2" />
      <rect x="2" y="8" width="12" height="9" fill="#e9b32c" stroke="#a5761a" />
      <path d="M3 11h10M3 14h10" stroke="#f8dc7f" />
      <path d="M8 10v4" stroke="#4a3510" strokeWidth="2" />
    </svg>
  );
}

function DoorIcon() {
  return (
    <svg width="16" height="16">
      <path d="M2 1h9v13H2z" fill="#555b61" stroke="#3b3f44" />
      <path d="M11 2l4-1.500v15L11 14z" fill="#b57b42" stroke="#7c4e24" strokeWidth=".7" />
      <path d="M0 15h11" stroke="#8a8a8a" />
    </svg>
  );
}

function CopyIcon() {
  return (
    <svg width="18" height="16" fill="#f7f8fa" stroke="#a9b0ba">
      <path d="M1.500.5h5l3 3v9h-8zM6.500.5v3h3" />
      <path d="M8.500 4.500h5l3 3v8h-8zM13.500 4.500v3h3" />
    </svg>
  );
}

function BroomIcon() {
  return (
    <svg width="14" height="16">
      <path d="M12 1L8 8" stroke="#a6703b" strokeWidth="2.200" />
      <path d="M5 7.500l5 2.500q-1 4-4 5.500Q3 14.500 2 12q3-1 3-4.500z" fill="#f8cf35" stroke="#c4941a" strokeWidth=".8" />
    </svg>
  );
}

function ExpandIcon() {
  return (
    <svg width="18" height="18" fill="#8ed22d" stroke="#42870f">
      <path d="M1.500 1.500h5L5 3l2 2-2 2-2-2-1.500 1.500z" />
      <path d="M16.500 1.500h-5L13 3l-2 2 2 2 2-2 1.500 1.500z" />
      <path d="M1.500 16.500h5L5 15l2-2-2-2-2 2-1.500-1.500z" />
      <path d="M16.500 16.500h-5L13 15l-2-2 2-2 2 2 1.500-1.500z" />
    </svg>
  );
}

function TrendIcon() {
  return (
    <svg width="16" height="16">
      <path d="M2 13h2v3H2zM5 12h2v4H5zM8 12h2v4H8zM11 10h2v6h-2z" fill="#e77a4a" />
      <path d="M1 10q6 0 9-5L8.500 3.500 15 1l-.5 6L12.500 6q-4 6-11 5.500z" fill="#78c02c" stroke="#4f8f17" strokeWidth=".6" />
    </svg>
  );
}
